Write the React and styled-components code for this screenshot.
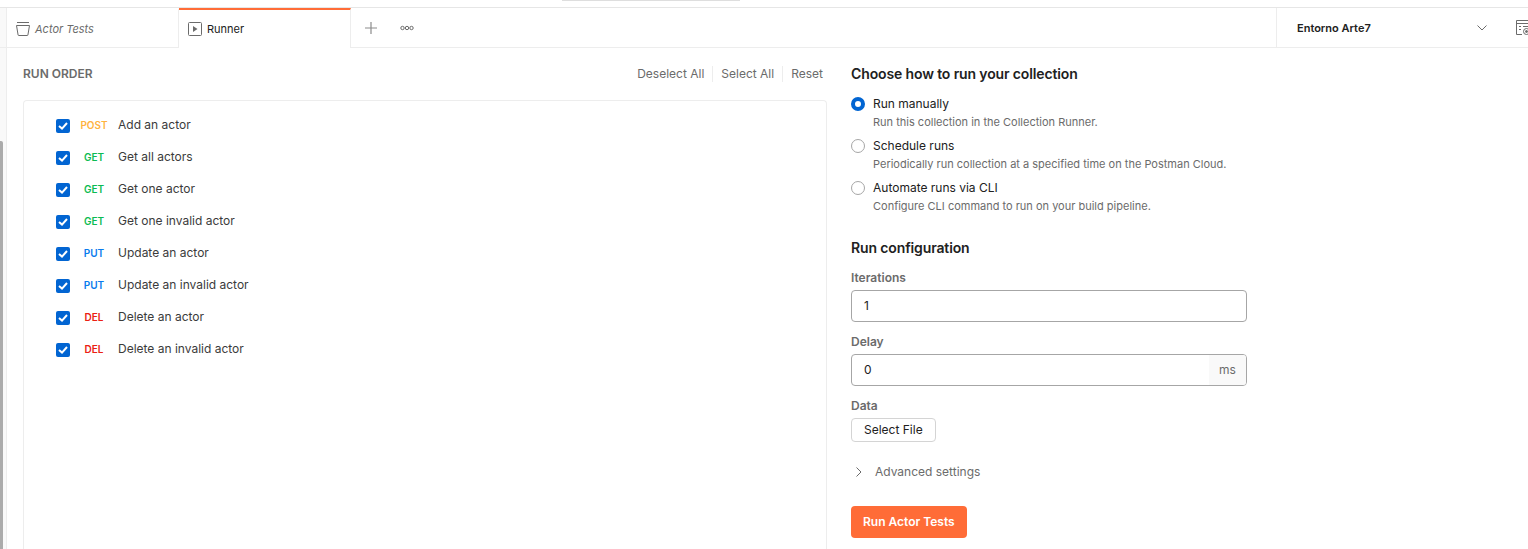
import { createGlobalStyle, styled } from 'styled-components';

const GlobalStyle = createGlobalStyle`
  html, body {
    margin: 0;
    height: 549px;
    overflow: hidden;
    background: #fff;
  }
  * { box-sizing: border-box; }
  body {
    font-family: Inter, "Liberation Sans", sans-serif;
    font-size: 12px;
    color: #212121;
  }
`

const Page = styled.div`
  display: flex;
  flex-direction: column;
  height: 549px;
`

const TopStrip = styled.div`
  height: 8px;
  padding-left: 562px;
  border-bottom: 1px solid #e6e6e6;
`

const TopHandle = styled.div`
  width: 178px;
  height: 1px;
  background: #dedede;
`

const TabBar = styled.div`
  display: flex;
  align-items: stretch;
  height: 40px;
  border-bottom: 1px solid #ededed;
`

const Tab = styled.div`
  display: flex;
  align-items: center;
  gap: 5px;
  width: 172px;
  padding-left: 9px;
  margin-bottom: ${({$active}) => $active ? -1 : 0}px;
  background: #fff;
  border-top: 2px solid ${({$active}) => $active ? '#ff6c37' : 'transparent'};
  border-right: 1px solid #ededed;
  color: ${({$active}) => $active ? '#212121' : '#6b6b6b'};
  font-style: ${({$italic}) => $italic ? 'italic' : 'normal'};
  font-size: 11px;
`

const IconButton = styled.div`
  display: flex;
  align-items: center;
  justify-content: center;
  width: ${({$width}) => $width}px;
  color: #8c8c8c;
`

const Spacer = styled.div`
  flex: 1;
`

const EnvSelect = styled.div`
  display: flex;
  align-items: center;
  width: 252px;
  padding-left: 20px;
  border-left: 1px solid #ededed;
  font-size: 11px;
  font-weight: 600;
  color: #212121;
  overflow: hidden;

  svg {
    flex-shrink: 0;
  }
`

const EnvLabel = styled.span`
  flex: 0 0 180px;
`

const EnvGap = styled.div`
  flex-shrink: 0;
  width: 29px;
`

const Body = styled.div`
  display: flex;
  flex: 1;
  min-height: 0;
`

const SideStrip = styled.div`
  position: relative;
  width: 7px;
  background: #f9f9f9;
  border-right: 1px solid #ededed;
`

const Thumb = styled.div`
  position: absolute;
  left: 0;
  top: 93px;
  bottom: 0;
  width: 3px;
  background: #ababab;
  border-top-right-radius: 2px;
`

const RunOrder = styled.section`
  display: flex;
  flex-direction: column;
  width: 820px;
  padding: 16px 0 0 16px;
`

const OrderHeader = styled.div`
  display: flex;
  align-items: center;
  justify-content: space-between;
  height: 20px;
  margin-bottom: 16px;
  padding-right: 4px;
`

const OrderTitle = styled.h2`
  margin: 0;
  padding-bottom: 2px;
  font-size: 12px;
  font-weight: 600;
  color: #6b6b6b;
`

const Links = styled.div`
  display: flex;
  align-items: center;
`

const LinkText = styled.span`
  padding: 0 8px;
  border-left: 1px solid ${({$first}) => $first ? 'transparent' : '#ededed'};
  font-size: 12px;
  line-height: 16px;
  color: #6b6b6b;

  &:last-child {
    padding-right: 0;
  }
`

const RequestList = styled.div`
  flex: 1;
  padding: 8px 0 0 32px;
  border: 1px solid #ededed;
  border-bottom: none;
  border-radius: 4px 4px 0 0;
`

const RequestRow = styled.div`
  display: flex;
  align-items: center;
  height: 32px;
`

const CheckBox = styled.div`
  display: flex;
  align-items: center;
  justify-content: center;
  width: 14px;
  height: 14px;
  margin-top: 2px;
  background: #0265d2;
  border-radius: 2px;
`

const Method = styled.span`
  width: 48px;
  text-align: center;
  font-size: 10px;
  font-weight: 600;
  color: ${({$color}) => $color};
`

const RequestName = styled.span`
  padding-bottom: 2px;
  font-size: 12px;
  color: #3b3b3b;
`

const Config = styled.section`
  display: flex;
  flex-direction: column;
  width: 396px;
  margin-left: 24px;
  padding-top: 16px;
`

const Heading = styled.h3`
  margin: 0;
  height: 20px;
  font-size: 14px;
  line-height: 20px;
  font-weight: 600;
  letter-spacing: -0.13px;
  color: #212121;
`

const RadioGroup = styled.div`
  display: flex;
  flex-direction: column;
  margin: 11px 0 17px;
`

const RadioRow = styled.div`
  display: grid;
  grid-template-columns: 14px 1fr;
  grid-auto-rows: 18px;
  column-gap: 8px;
  align-items: center;
  align-content: start;
  height: 42px;
`

const Radio = styled.span`
  width: 14px;
  height: 14px;
  border-radius: 50%;
  background: #fff;
  border: ${({$on}) => $on ? '4px solid #0265d2' : '1px solid #a6a6a6'};
`

const RadioLabel = styled.span`
  font-size: 12px;
  line-height: 18px;
  color: #212121;
`

const RadioHint = styled.span`
  grid-column: 2;
  font-size: 11px;
  line-height: 18px;
  color: #6b6b6b;
`

const FieldLabel = styled.label`
  display: block;
  margin: 12px 0 4px;
  font-size: 12px;
  line-height: 16px;
  font-weight: 600;
  color: #6b6b6b;
`

const InputBox = styled.div`
  display: flex;
  align-items: stretch;
  height: 32px;
  border: 1px solid #a6a6a6;
  border-radius: 4px;
  overflow: hidden;
`

const InputValue = styled.div`
  flex: 1;
  display: flex;
  align-items: center;
  padding: 0 0 2px 12px;
  font-size: 12px;
  color: #212121;
`

const Suffix = styled.div`
  display: flex;
  align-items: center;
  justify-content: center;
  width: 37px;
  padding-bottom: 2px;
  background: #f9f9f9;
  font-size: 12px;
  color: #6b6b6b;
`

const FileButton = styled.button`
  align-self: flex-start;
  height: 24px;
  padding: 0 12px 2px;
  background: #fff;
  border: 1px solid #d4d4d4;
  border-radius: 4px;
  font: inherit;
  font-size: 12px;
  color: #212121;
`

const Advanced = styled.div`
  display: flex;
  align-items: center;
  gap: 13px;
  height: 20px;
  margin-top: 20px;
  padding-left: 5px;
  font-size: 12px;
  color: #6b6b6b;

  span {
    padding-bottom: 2px;
  }
`

const RunButton = styled.button`
  align-self: flex-start;
  height: 32px;
  margin-top: 24px;
  padding: 0 12px 2px;
  background: #ff6c37;
  border: none;
  border-radius: 4px;
  font: inherit;
  font-size: 12px;
  font-weight: 600;
  color: #fff;
`

const METHOD_COLORS = {
  POST: '#ffb33f',
  GET: '#0cbb52',
  PUT: '#097bed',
  DEL: '#eb2013',
}

const requests = [
  ['POST', 'Add an actor'],
  ['GET', 'Get all actors'],
  ['GET', 'Get one actor'],
  ['GET', 'Get one invalid actor'],
  ['PUT', 'Update an actor'],
  ['PUT', 'Update an invalid actor'],
  ['DEL', 'Delete an actor'],
  ['DEL', 'Delete an invalid actor'],
]

const runModes = [
  ['Run manually', 'Run this collection in the Collection Runner.', true],
  ['Schedule runs', 'Periodically run collection at a specified time on the Postman Cloud.', false],
  ['Automate runs via CLI', 'Configure CLI command to run on your build pipeline.', false],
]

function CollectionIcon() {
  return (
    <svg width="14" height="14" viewBox="0 0 14 14" fill="none" stroke="#6b6b6b" strokeWidth="1">
      <path d="M1 .5h12" />
      <path d="M.5 3.5h13l-1.6 9.5a.6.6 0 0 1-.6.5H2.7a.6.6 0 0 1-.6-.5z" />
    </svg>
  )
}

function RunnerIcon() {
  return (
    <svg width="14" height="14" viewBox="0 0 14 14" fill="none">
      <rect x=".5" y=".5" width="13" height="13" rx="1" stroke="#6b6b6b" />
      <path d="M5 4l4.5 3L5 10z" fill="#6b6b6b" />
    </svg>
  )
}

function PlusIcon() {
  return (
    <svg width="14" height="14" viewBox="0 0 14 14" stroke="#8c8c8c" strokeWidth="1.2">
      <path d="M7 1v12M1 7h12" />
    </svg>
  )
}

function DotsIcon() {
  return (
    <svg width="15" height="6" viewBox="0 0 15 6" fill="none" stroke="#6b6b6b">
      <circle cx="2.5" cy="3" r="1.7" />
      <circle cx="7" cy="3" r="1.7" />
      <circle cx="11.5" cy="3" r="1.7" />
    </svg>
  )
}

function ChevronDown() {
  return (
    <svg width="10" height="6" viewBox="0 0 10 6" fill="none" stroke="#6b6b6b">
      <path d="M.5.5L5 5 9.5.5" />
    </svg>
  )
}

function ChevronRight() {
  return (
    <svg width="6" height="10" viewBox="0 0 6 10" fill="none" stroke="#6b6b6b">
      <path d="M.5.5L5 5 .5 9.5" />
    </svg>
  )
}

function EnvQuickLook() {
  return (
    <svg width="16" height="16" viewBox="0 0 16 16" fill="none" stroke="#6b6b6b">
      <path d="M6 14.5H.5V.5h13V7" />
      <path d="M.5 3.5h13M3 6.5h2M7 6.5h5M3 9.5h2" />
      <circle cx="10.5" cy="11.5" r="3" />
      <circle cx="10.5" cy="11.5" r="1" fill="#6b6b6b" />
    </svg>
  )
}

function CheckMark() {
  return (
    <svg width="10" height="8" viewBox="0 0 10 8" fill="none" stroke="#fff" strokeWidth="2">
      <path d="M1 4l3 2.6L9 1" />
    </svg>
  )
}

export default function App() {
  return (
    <Page>
      <GlobalStyle />
      <TopStrip>
        <TopHandle />
      </TopStrip>
      <TabBar>
        <SideStrip />
        <Tab $italic>
          <CollectionIcon />
          <span>Actor Tests</span>
        </Tab>
        <Tab $active>
          <RunnerIcon />
          <span>Runner</span>
        </Tab>
        <IconButton $width={40}><PlusIcon /></IconButton>
        <IconButton $width={32}><DotsIcon /></IconButton>
        <Spacer />
        <EnvSelect>
          <EnvLabel>Entorno Arte7</EnvLabel>
          <ChevronDown />
          <EnvGap />
          <EnvQuickLook />
        </EnvSelect>
      </TabBar>
      <Body>
        <SideStrip>
          <Thumb />
        </SideStrip>
        <RunOrder>
          <OrderHeader>
            <OrderTitle>RUN ORDER</OrderTitle>
            <Links>
              <LinkText $first>Deselect All</LinkText>
              <LinkText>Select All</LinkText>
              <LinkText>Reset</LinkText>
            </Links>
          </OrderHeader>
          <RequestList>
            {requests.map(([method, name]) => (
              <RequestRow key={name}>
                <CheckBox><CheckMark /></CheckBox>
                <Method $color={METHOD_COLORS[method]}>{method}</Method>
                <RequestName>{name}</RequestName>
              </RequestRow>
            ))}
          </RequestList>
        </RunOrder>
        <Config>
          <Heading>Choose how to run your collection</Heading>
          <RadioGroup>
            {runModes.map(([label, hint, on]) => (
              <RadioRow key={label}>
                <Radio $on={on} />
                <RadioLabel>{label}</RadioLabel>
                <RadioHint>{hint}</RadioHint>
              </RadioRow>
            ))}
          </RadioGroup>
          <Heading>Run configuration</Heading>
          <FieldLabel>Iterations</FieldLabel>
          <InputBox><InputValue>1</InputValue></InputBox>
          <FieldLabel>Delay</FieldLabel>
          <InputBox>
            <InputValue>0</InputValue>
            <Suffix>ms</Suffix>
          </InputBox>
          <FieldLabel>Data</FieldLabel>
          <FileButton>Select File</FileButton>
          <Advanced>
            <ChevronRight />
            <span>Advanced settings</span>
          </Advanced>
          <RunButton>Run Actor Tests</RunButton>
        </Config>
      </Body>
    </Page>
  )
}
